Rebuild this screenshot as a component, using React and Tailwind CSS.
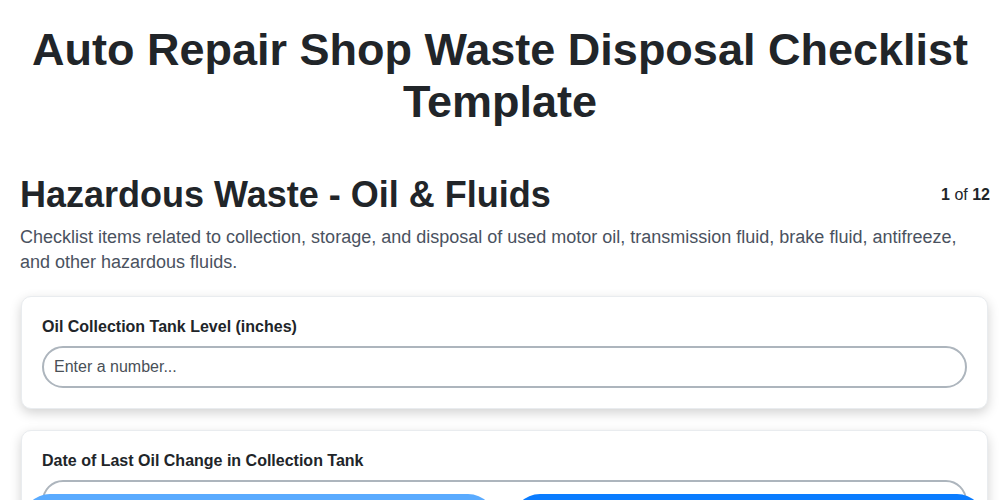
import React from 'react';

const fields = [
  { label: 'Oil Collection Tank Level (inches)', placeholder: 'Enter a number...', type: 'number' },
  { label: 'Date of Last Oil Change in Collection Tank', placeholder: 'Enter date...', type: 'text' },
];

const App = () => {
  return (
    <div className="min-h-screen bg-white text-[#212529]" style={{ fontFamily: '"Liberation Sans", Arial, sans-serif' }}>
      <h1 className="pt-6 px-5 text-center text-[45px] leading-[52px] font-bold">
        Auto Repair Shop Waste Disposal Checklist Template
      </h1>

      <div className="pl-5 pr-[10px] mt-[45px]">
        {/* Section header */}
        <div className="flex items-center justify-between">
          <h2 className="text-[36px] leading-[1.2] font-bold">Hazardous Waste - Oil &amp; Fluids</h2>
          <div className="text-base">
            <span className="font-bold">1</span> of <span className="font-bold">12</span>
          </div>
        </div>
        <p className="mt-[9px] pr-4 text-[18px] leading-[1.4] text-[#4a5260]">
          Checklist items related to collection, storage, and disposal of used motor oil, transmission fluid, brake
          fluid, antifreeze, and other hazardous fluids.
        </p>

        {/* Fields */}
        <div className="mt-[20px] flex flex-col gap-[21px] ml-px mr-[2px] pb-24">
          {fields.map((f) => (
            <div
              key={f.label}
              className="bg-white border border-[#e9ecef] rounded-[10px] shadow-[0_4px_12px_rgba(0,0,0,0.18)] px-5 pt-[18px] pb-5"
            >
              <label className="block text-base leading-6 font-bold mb-[7px]">{f.label}</label>
              <input
                type="text"
                placeholder={f.placeholder}
                className="w-full h-[42px] rounded-full border-2 border-[#adb5bd] px-[10px] text-base text-[#212529] placeholder:text-[#495057] outline-none"
              />
            </div>
          ))}
        </div>
      </div>

      {/* Navigation buttons */}
      <div className="fixed left-0 right-0 top-[494px] flex gap-4 pl-[22px] pr-[15px]">
        <button className="flex-1 h-14 pt-4 rounded-full bg-[#5aabff] text-white font-bold text-lg">Previous</button>
        <button className="flex-1 h-14 pt-4 rounded-full bg-[#0a7cff] text-white font-bold text-lg">Next</button>
      </div>
    </div>
  );
};

export default App;
